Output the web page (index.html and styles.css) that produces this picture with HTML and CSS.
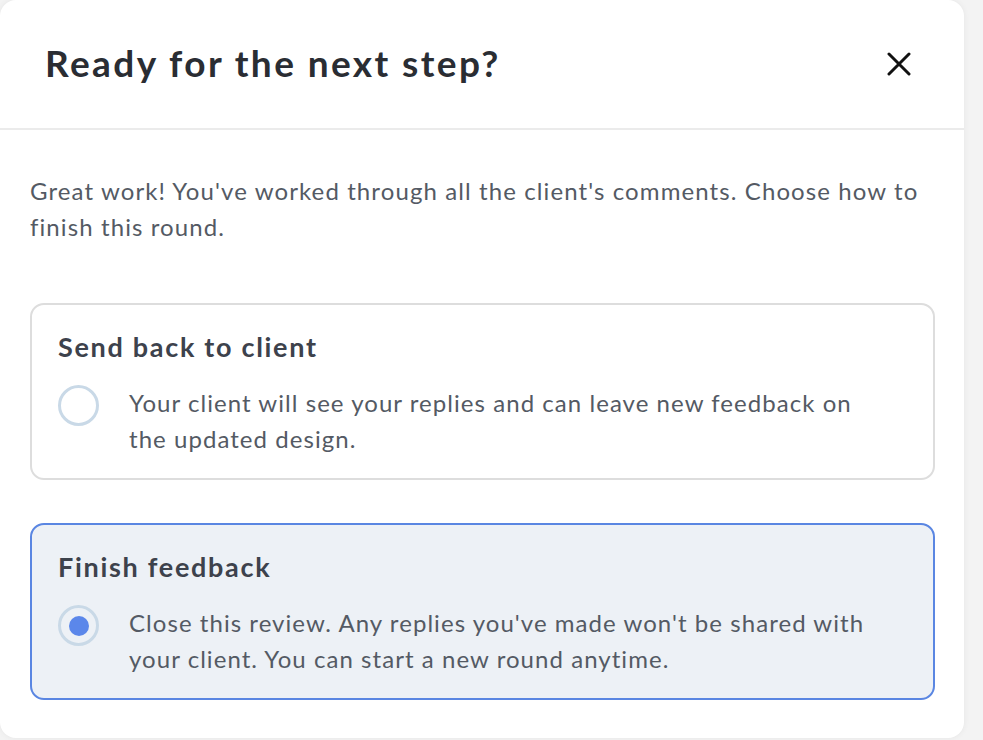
FILE: index.html
```html
<!DOCTYPE html>
<html lang="en">
<head>
<meta charset="utf-8">
<title>Ready for the next step?</title>
<link rel="stylesheet" href="styles.css">
</head>
<body>
<div class="modal">
  <header class="modal-header">
    <h1 class="modal-title">Ready for the next step?</h1>
    <button class="close-btn" aria-label="Close">
      <svg width="24" height="24" viewBox="0 0 24 24"><path d="M2 2L22 22M22 2L2 22" stroke="#111" stroke-width="3" stroke-linecap="round" fill="none"/></svg>
    </button>
  </header>
  <div class="modal-body">
    <p class="intro">Great work! You've worked through all the client's comments. Choose how to finish this round.</p>
    <div class="options">
      <label class="option">
        <span class="option-title">Send back to client</span>
        <span class="option-row">
          <span class="radio"></span>
          <span class="option-text">Your client will see your replies and can leave new feedback on the updated design.</span>
        </span>
      </label>
      <label class="option selected">
        <span class="option-title">Finish feedback</span>
        <span class="option-row">
          <span class="radio checked"></span>
          <span class="option-text">Close this review. Any replies you've made won't be shared with your client. You can start a new round anytime.</span>
        </span>
      </label>
    </div>
  </div>
</div>
</body>
</html>
```
FILE: styles.css
```css
* { box-sizing: border-box; }
html, body { margin: 0; padding: 0; }
body {
  background: #f3f3f3;
  font-family: Lato, "Open Sans", sans-serif;
  width: 983px;
  height: 740px;
  overflow: hidden;
}
.modal {
  width: 964px;
  height: 738px;
  background: #fff;
  border-radius: 16px;
  box-shadow: 0 0 6px rgba(0,0,0,0.06);
  display: flex;
  flex-direction: column;
}
.modal-header {
  height: 130px;
  border-bottom: 2px solid #ebebeb;
  display: flex;
  align-items: center;
  justify-content: space-between;
  padding: 0 53px 0 45px;
}
.modal-title {
  margin: 0;
  font-size: 37px;
  font-weight: 700;
  color: #2a2d33;
  letter-spacing: 2.4px;
  padding-bottom: 4px;
}
.close-btn {
  background: none;
  border: 0;
  padding: 0;
  width: 24px;
  height: 24px;
  display: flex;
}
.modal-body {
  padding: 43px 29px 0 30px;
}
.intro {
  margin: 0;
  font-size: 24px;
  line-height: 36px;
  color: #545a64;
  letter-spacing: 1.1px;
}
.options {
  margin-top: 58px;
  display: flex;
  flex-direction: column;
  gap: 43px;
}
.option {
  display: flex;
  flex-direction: column;
  gap: 20px;
  border: 2px solid #dddddd;
  border-radius: 14px;
  padding: 24px 26px 21px 26px;
  height: 177px;
}
.option.selected {
  background: #edf1f6;
  border-color: #5a86e2;
}
.option-title {
  font-size: 27px;
  line-height: 36px;
  font-weight: 700;
  color: #3d424c;
  letter-spacing: 1.7px;
}
.option-row {
  display: flex;
  align-items: flex-start;
  gap: 30px;
}
.radio {
  flex: none;
  width: 41px;
  height: 41px;
  border: 3px solid #c9d9e7;
  border-radius: 50%;
  display: flex;
  align-items: center;
  justify-content: center;
}
.radio.checked::after {
  content: "";
  width: 20px;
  height: 20px;
  border-radius: 50%;
  background: #5b87ea;
}
.option-text {
  font-size: 24px;
  line-height: 36px;
  color: #545a64;
  letter-spacing: 1.05px;
  padding-right: 30px;
}
```
